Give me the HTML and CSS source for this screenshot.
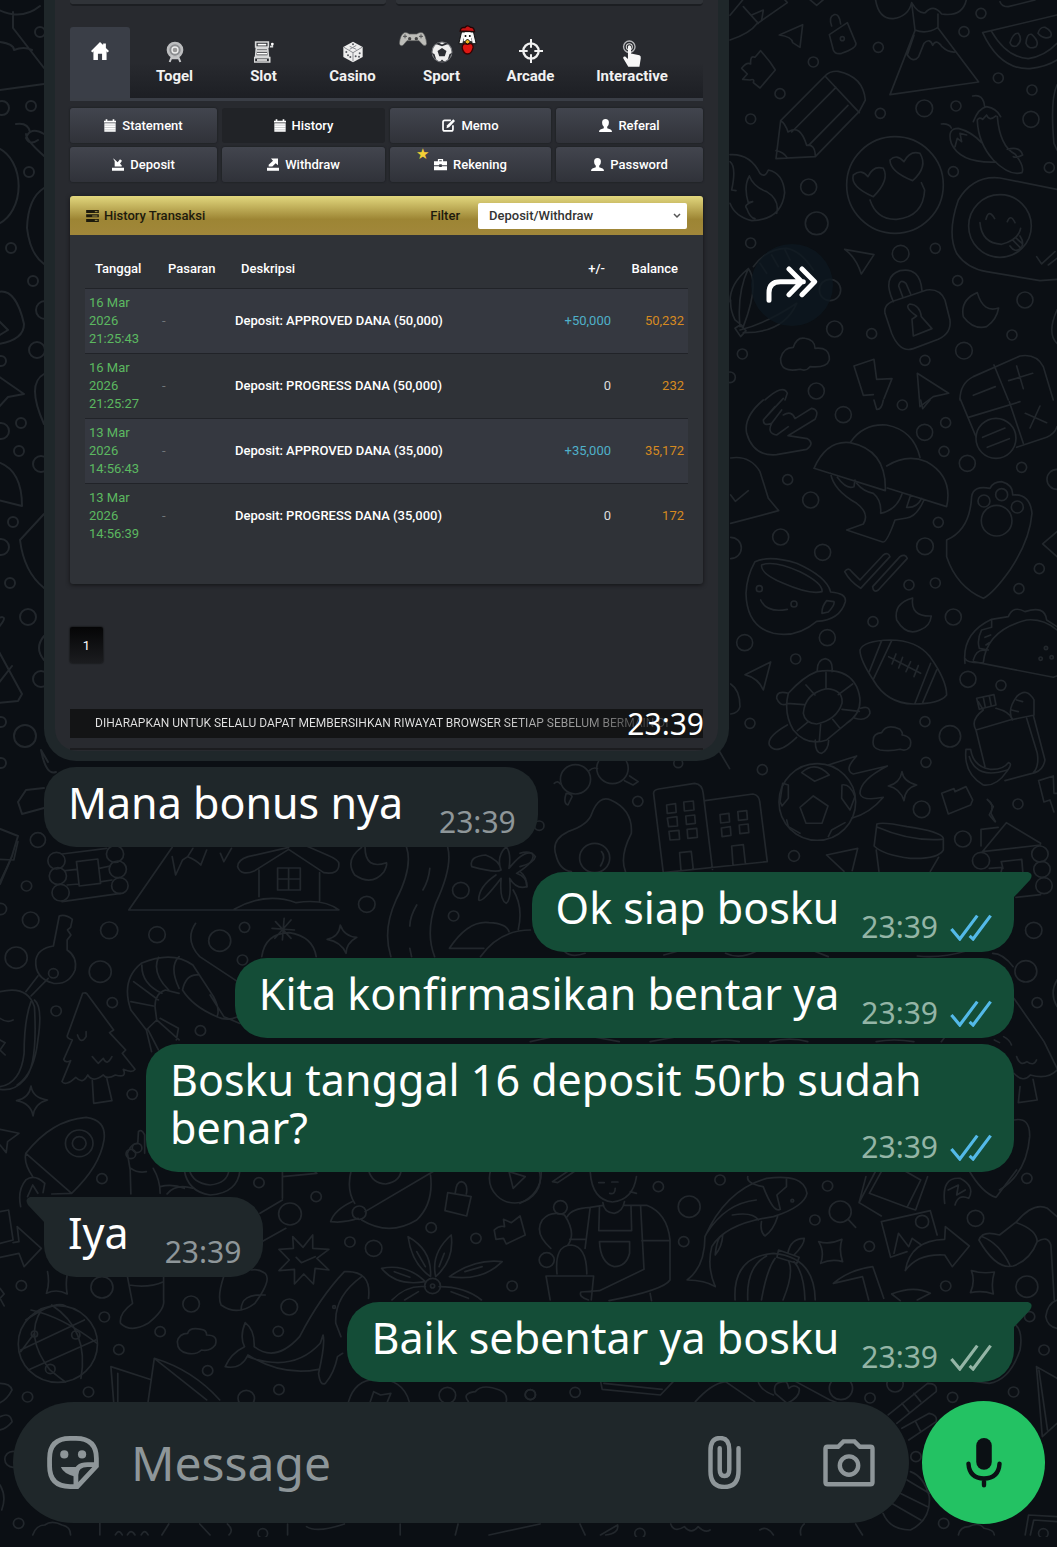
FILE: index.html
```html
<!DOCTYPE html>
<html lang="id">
<head>
<meta charset="utf-8">
<meta name="viewport" content="width=device-width, initial-scale=1">
<title>Chat</title>
<link rel="stylesheet" href="styles.css">
</head>

<body>
  <!-- wallpaper doodles -->
  <svg class="wallpaper" viewBox="0 0 1057 1537" preserveAspectRatio="xMidYMin slice" aria-hidden="true">
    <!-- left edge -->
    <g>
      <path d="M-5 8Q20 22 40 6M13 12V28L44 68M0 42Q14 44 14 50Q24 46 32 50M0 90L44 84M16 124Q28 122 30 132M44 134Q30 126 26 138Q30 146 38 140M44 156Q26 140 26 134M-2 148A30 40 0 0 1-2 224M44 188Q28 198 27 228Q30 254 44 264M-2 292Q16 288 24 324Q24 340-2 344M-2 320L8 330L-2 336M-2 376L24 394L8 397L-2 408M44 374Q26 384 44 424M-2 462Q22 470 22 506L-2 500M44 514L20 540Q24 572 44 588M-2 618Q10 614-2 628M-2 650L22 694L18 701L-2 703M-2 684L12 666M44 636Q34 648 44 660M-2 828L18 836L12 856L0 884M18 802L26 790L44 788M18 802L22 814L44 808M41 750L48 762M41 750Q46 776 56 772"/>
      <circle cx="40" cy="32" r="5"/><circle cx="31" cy="106" r="5"/><circle cx="2" cy="108" r="7"/><circle cx="29" cy="172" r="5"/><circle cx="11" cy="248" r="5"/><circle cx="33" cy="281" r="5"/><circle cx="45" cy="310" r="9"/><circle cx="37" cy="350" r="8"/><circle cx="1" cy="361" r="5"/><circle cx="21" cy="423" r="5"/><circle cx="1" cy="431" r="8"/><circle cx="19" cy="451" r="5"/><circle cx="41" cy="464" r="8"/><circle cx="13" cy="522" r="5"/><circle cx="1" cy="547" r="8"/><circle cx="10" cy="583" r="5"/><circle cx="28" cy="617" r="8"/><circle cx="41" cy="679" r="8"/><circle cx="25" cy="736" r="11"/><circle cx="1" cy="722" r="5"/><circle cx="1" cy="763" r="5"/>
    </g>
    <!-- top right -->
    <g transform="translate(700 0) scale(.3333)" stroke-width="5">
      <path d="M90 46L128 0M90 120Q150 100 170 72L262 8L250-6M130 20L175 70M155 45L190 30L185 60M325-5L350 16L375-5"/>
      <path d="M238 105L308 74L300 142L278 128Q276 110 238 105ZM388 104L442 68L468 130Q470 144 425 160Q405 164 400 150ZM395 78Q385 50 402 44Q418 40 422 72"/>
      <path d="M125 205Q140 185 152 192Q150 165 165 172L182 152L210 186L226 210L180 264L160 248Q165 235 150 240L128 238L142 222Z"/>
      <path d="M242 362L375 228Q390 212 415 214Q490 230 496 300L478 334L346 470L228 476ZM375 228L478 338M408 262L275 396M444 316L326 436M242 362Q256 370 264 396Q300 370 320 436Q345 432 346 468M228 452Q250 455 262 474"/>
      <path d="M526-5Q535 58 580 56Q625 50 635 8Q655 42 676 38Q700 10 725 42Q790 52 800-5M635 8L645 90Q680 104 714 82V42M645 92L570 284L836 246L714 84M642 106L622 165Q640 190 656 170L672 130Q690 112 698 136Q708 115 726 140Q745 158 766 156"/>
      <path d="M900 5Q905 20 925 20L1005 0M848 98L1071 45M848 98Q900 210 990 206Q1040 200 1071 180M875 95Q920 172 985 176Q1035 168 1071 130"/>
      <path d="M930 128Q940 98 955 100Q970 120 950 138Q935 142 930 128ZM978 130Q980 100 995 103Q1020 125 1008 140Q985 150 978 130ZM1014 100Q1020 80 1035 82Q1060 95 1052 110Q1030 120 1014 100Z"/>
      <path d="M818 288Q850 280 854 320M820 365Q835 325 860 320Q890 325 902 350M832 360Q838 350 848 358L860 345Q868 365 888 348M832 362Q835 430 880 480Q930 530 966 518Q975 500 945 462Q900 440 892 350M922 448Q960 438 968 465Q950 475 940 470M724 372Q748 370 754 384M754 430Q740 385 775 385Q815 395 845 428M754 430Q780 490 888 486M765 440L772 415L785 425L780 400L800 405"/>
      <path d="M90 464Q150 460 180 520Q195 535 205 510Q250 520 254 578Q245 660 155 662Q105 650 90 610M90 485Q110 500 95 570L108 572M148 528Q160 560 200 575Q240 600 230 640M148 528Q130 560 145 608L158 605Q130 615 140 625Q150 655 165 656"/>
      <circle cx="585" cy="555" r="145"/>
      <path d="M520 590Q450 560 460 525Q485 505 504 530Q520 495 550 505Q570 540 520 590ZM638 542Q570 515 570 480Q590 460 612 485Q630 450 660 460Q685 500 638 542ZM510 600Q530 660 590 658Q670 650 674 570L664 548"/>
      <path d="M1071 568L900 534Q820 525 775 600Q740 700 770 760Q800 805 860 815L1020 842L1071 838M840 668Q845 730 905 733Q955 720 962 685M858 658Q866 625 884 656M922 665Q932 640 945 668M930 738Q945 760 962 745Q975 730 960 708M940 722L960 742M948 714L968 732M1010 770L1025 792L1065 755M1045 795L1071 775"/>
      <circle cx="900" cy="678" r="94"/>
      <path d="M434 748L522 764L484 822Q468 772 434 748ZM90 905Q90 850 145 806Q180 850 130 980L105 960Q90 930 92 900M145 806Q110 880 120 980M120 990Q200 970 290 910Q250 1000 130 998M105 985L122 1010L138 992L120 975ZM160 800Q200 745 260 745Q300 750 340 810M180 790L200 820M215 765L235 800M255 750L270 780"/>
      <path d="M580 905Q545 830 600 812Q660 800 666 872M608 890L596 858Q600 835 618 850L632 882M555 940Q550 910 590 900L680 870Q720 865 735 900L750 960Q755 1000 715 1018L640 1046Q600 1060 575 1000ZM636 958L650 948Q610 920 630 912Q660 915 664 950L696 986L640 1008Z"/>
      <path d="M832 878Q780 900 790 950Q820 990 860 980Q890 960 896 924Q850 940 832 878ZM242 1075Q250 1042 280 1042Q290 1010 315 1015Q345 1020 345 1045Q390 1040 388 1080Q380 1105 330 1100Q320 1115 300 1108Q240 1120 242 1075ZM462 1098L522 1078L530 1138L576 1136L552 1196M462 1098L490 1186L520 1184M652 1120L746 1180L700 1190L660 1220ZM780 1200Q780 1150 820 1130L960 1068Q1010 1060 1030 1100L1060 1200M882 1095L925 1200M820 1186L886 1160M950 1098L970 1166M926 1142L998 1120M195 1200Q250 1150 262 1180L255 1200M1071 930Q1040 1000 1071 1030M1071 255Q1050 300 1062 430L1071 450"/>
      <circle cx="843" cy="40" r="15"/><circle cx="792" cy="95" r="15"/><circle cx="535" cy="142" r="15"/><circle cx="427" cy="116" r="6"/><circle cx="340" cy="186" r="15"/><circle cx="240" cy="281" r="15"/><circle cx="152" cy="357" r="15"/><circle cx="541" cy="340" r="15"/><circle cx="673" cy="325" r="25"/><circle cx="768" cy="318" r="15"/><circle cx="895" cy="234" r="15"/><circle cx="996" cy="270" r="15"/><circle cx="993" cy="358" r="24"/><circle cx="1048" cy="503" r="15"/><circle cx="760" cy="515" r="15"/><circle cx="326" cy="561" r="24"/><circle cx="350" cy="670" r="34"/><circle cx="152" cy="729" r="15"/><circle cx="602" cy="761" r="25"/><circle cx="706" cy="745" r="15"/><circle cx="773" cy="842" r="15"/><circle cx="390" cy="870" r="32"/><circle cx="404" cy="987" r="24"/><circle cx="515" cy="1001" r="15"/><circle cx="975" cy="900" r="24"/><circle cx="936" cy="1005" r="15"/><circle cx="792" cy="1052" r="25"/><circle cx="675" cy="1081" r="15"/><circle cx="127" cy="1062" r="15"/><circle cx="349" cy="1173" r="24"/><circle cx="90" cy="1132" r="16"/>
    </g>
    <!-- middle right -->
    <g transform="translate(700 400) scale(.3333)" stroke-width="5">
      <path d="M190 0Q130 50 140 100Q160 170 230 164L320 148Q345 130 322 116L264 107L345 58Q360 30 335 25L285 56Q275 30 250 45M250-5L190 60Q190 80 215 70L245 30M215 70Q200 100 230 105L265 80M190 60L225 20M522 0L530 28Q545 30 550 0M662 0L668 26L690 0"/>
      <path d="M780-5L828 110M805 52L960 5M928 5L970 130M950 142L1040 112Q1065 100 1071 80M976 40L1040 68M1020 18L990 84M848 112L915 84M862 142L928 116"/>
      <path d="M452 126Q490 70 560 75Q640 90 660 172M342 205Q380 120 450 128Q560 150 556 272ZM560 198Q620 160 680 185Q760 230 740 320L562 264M392 220Q400 270 470 310Q510 340 490 372L440 390L548 426Q560 430 585 360L620 354Q650 350 672 300M470 250Q490 275 520 280Q545 300 542 340Q590 330 606 282M412 232Q440 270 462 260L465 240M620 322L632 285M620 322Q650 325 665 295"/>
      <path d="M92 174Q150 165 180 215L205 295L236 332L92 370M92 285L106 304L145 272M92 412A32 32 0 0 1 92 476M92 852Q120 870 120 920Q115 940 92 942"/>
      <path d="M740 420Q810 390 815 290Q820 255 870 265Q880 245 905 245Q940 255 938 285Q990 280 996 340Q990 420 930 510Q880 580 850 595Q770 560 740 470ZM1071 395L1028 432L1071 470"/>
      <path d="M165 485Q210 465 290 490Q380 530 392 576Q440 580 436 605Q420 660 350 664Q290 715 220 700Q140 680 138 580Q140 530 165 485ZM185 495Q220 480 300 515Q370 550 366 575Q330 585 250 550Q180 520 185 495ZM380 602L402 605Q405 615 385 636L366 640Q365 620 380 602ZM182 600Q200 640 262 628"/>
      <path d="M434 515Q445 500 455 515L480 540L550 465Q565 455 570 470L482 565Q450 545 434 515ZM518 560L600 470Q615 460 622 475L535 570Q520 580 518 560Z"/>
      <path d="M638 594Q580 610 590 660Q620 710 660 690Q690 680 694 648Q630 650 638 594ZM480 750Q490 722 570 720Q650 720 690 770Q740 840 740 885Q720 912 640 912Q560 910 520 840Q480 780 480 750ZM545 722L508 815M575 722L520 838M692 790L645 910M710 810L668 908M566 770L662 820M588 762L576 792M608 772L596 804M632 785L618 815M655 797L642 830"/>
      <path d="M795 790Q785 700 875 658L925 650Q940 615 975 635Q1035 615 1040 660L1071 680M820 785L1060 832L1071 828M795 775Q800 790 850 788Q860 690 980 660Q1030 655 1071 690M875 660V682L845 690Q830 720 838 745L865 750M820 780Q830 745 858 752M855 712L872 705M858 735L868 728"/>
      <path d="M135 824L212 786L190 870Q175 835 135 824ZM265 880Q310 830 350 815Q440 800 470 860Q500 930 440 970L380 1020Q320 1040 280 990Q250 940 265 880ZM310 940Q315 880 380 866Q430 870 426 910Q410 960 350 972Q315 970 310 940ZM352 815Q350 780 376 776Q400 780 396 815M265 880Q230 870 230 895Q240 920 260 912M482 925Q510 915 510 940Q500 965 465 955M262 975Q200 1010 208 1035Q230 1070 290 1012M346 1020Q345 1060 365 1060Q385 1050 386 1022M378 818V866M318 855L345 885M262 910L312 914M292 992L325 965M358 1025L362 972M398 958L420 985M426 928L478 934M415 884L458 852"/>
      <path d="M520 1020Q520 1000 545 998Q560 970 600 988Q610 1000 606 1005Q640 1010 630 1040Q620 1055 600 1048Q570 1055 540 1050Q515 1045 520 1020ZM828 990L930 960L1000 946L1035 1080Q1030 1110 1005 1118L915 1142M828 990Q810 960 850 930L835 905M828 990L855 1100M830 895L882 884L888 915L838 928ZM850 892L856 922M868 888L874 918M888 925Q930 935 938 960Q920 930 950 890Q980 860 1002 900V945M950 900L968 905M935 930L955 935M980 955L1012 1060Q1018 1100 1000 1118M798 1048H812Q820 1100 870 1108Q910 1110 925 1088Q940 1090 920 1115Q890 1160 850 1155Q790 1120 798 1048ZM808 1070Q830 1140 922 1110"/>
      <circle cx="352" cy="1206" r="115"/>
      <path d="M340 1188L384 1218L366 1270H318L300 1222ZM305 1118Q345 1080 388 1125L344 1144ZM385 1095L470 1068Q430 1110 460 1122L562 1098Q480 1140 480 1180Q485 1205 550 1192Q510 1240 455 1255M240 1205L248 1150L265 1155V1195L246 1218ZM426 1155Q450 1150 465 1190L450 1230L425 1195ZM260 1260L265 1280L300 1300M385 1310L395 1290L435 1268"/>
      <path d="M606 1115Q610 1145 650 1155Q615 1165 612 1202Q600 1165 565 1158Q600 1150 606 1115ZM725 1180L762 1166L765 1175L798 1160L818 1200L812 1215L745 1242ZM862 1198L880 1220L868 1245L885 1265M1016 1142L1060 1128L1062 1180H1071M1016 1142L1032 1206L1050 1200L1062 1236"/>
      <circle cx="888" cy="115" r="60"/><circle cx="890" cy="362" r="46"/><circle cx="852" cy="303" r="18"/><circle cx="905" cy="284" r="18"/><circle cx="952" cy="321" r="18"/>
      <circle cx="178" cy="566" r="9"/><circle cx="282" cy="612" r="9"/><circle cx="1038" cy="744" r="5"/><circle cx="1022" cy="776" r="5"/><circle cx="1055" cy="772" r="5"/>
      <circle cx="430" cy="44" r="24"/><circle cx="607" cy="15" r="15"/><circle cx="674" cy="97" r="24"/><circle cx="737" cy="68" r="15"/><circle cx="732" cy="154" r="15"/><circle cx="802" cy="190" r="24"/><circle cx="965" cy="202" r="15"/><circle cx="263" cy="239" r="15"/><circle cx="332" cy="300" r="24"/><circle cx="242" cy="411" r="24"/><circle cx="368" cy="457" r="24"/><circle cx="715" cy="367" r="15"/><circle cx="675" cy="439" r="25"/><circle cx="627" cy="555" r="15"/><circle cx="706" cy="549" r="15"/><circle cx="957" cy="566" r="15"/><circle cx="1018" cy="506" r="15"/><circle cx="519" cy="665" r="15"/><circle cx="760" cy="651" r="24"/><circle cx="382" cy="713" r="24"/><circle cx="134" cy="728" r="24"/><circle cx="287" cy="777" r="15"/><circle cx="804" cy="838" r="24"/><circle cx="903" cy="856" r="15"/><circle cx="675" cy="965" r="15"/><circle cx="750" cy="1009" r="32"/><circle cx="150" cy="970" r="15"/><circle cx="187" cy="1109" r="15"/><circle cx="678" cy="1087" r="15"/><circle cx="665" cy="1228" r="25"/><circle cx="954" cy="1212" r="15"/><circle cx="1071" cy="238" r="30"/>
    </g>
    <!-- lower right -->
    <g transform="translate(520 740) scale(.3425 .3333)" stroke-width="5">
      <circle cx="162" cy="118" r="44"/><circle cx="270" cy="85" r="46"/><circle cx="218" cy="354" r="44"/>
      <path d="M202 92Q215 80 226 86M135 160Q150 160 152 170L140 195Q125 190 135 160ZM320 108L345 125L330 135L305 122M100 130Q110 120 118 132M580 30L612 86M105 345Q90 300 140 275Q200 255 210 220Q230 165 265 180Q330 210 325 280Q290 350 308 395M105 345Q115 390 150 395M238 335Q252 350 235 378M0 340Q30 330 45 350Q40 370 0 380M0 395Q20 410 20 440"/>
      <path d="M418 395L390 160Q390 150 405 147L510 130Q532 132 535 160L562 388M540 182L680 162Q698 165 700 185L722 365L418 398M428 195L454 191L456 217L430 220ZM478 186L506 183L508 210L480 213ZM430 234L458 230L460 258L434 260ZM484 228L510 225L512 250L486 253ZM435 274L464 271L466 298L438 300ZM488 268L516 265L518 292L490 295ZM584 224L610 220L612 246L586 249ZM636 215L662 212L664 238L638 241ZM588 264L614 260L616 286L590 290ZM640 255L666 252L668 278L642 281ZM470 392L466 338L500 334L506 388M622 376L618 318L652 314L658 370"/>
      <path d="M895 345L986 325L970 392M895 345L946 394M1042 252Q1060 245 1130 260Q1230 275 1236 295V330Q1220 358 1140 355Q1060 345 1034 318ZM1044 262Q1140 305 1232 298M1040 330L1048 394M1222 352L1198 394M1346 318V268L1396 262M1350 335L1420 248L1520 310M1350 335L1520 315M1370 385L1408 382L1405 395M1405 365L1465 358L1468 395M1405 365L1410 385M1448 472L1520 464M1365 180Q1385 190 1375 220L1388 245"/>
      <circle cx="1346" cy="362" r="25"/><circle cx="1518" cy="342" r="24"/><circle cx="1524" cy="388" r="24"/><circle cx="1530" cy="437" r="24"/><circle cx="344" cy="184" r="15"/><circle cx="800" cy="348" r="16"/><circle cx="462" cy="70" r="13"/><circle cx="56" cy="257" r="14"/><circle cx="1293" cy="297" r="24"/><circle cx="1500" cy="571" r="24"/><circle cx="1477" cy="694" r="32"/><circle cx="1510" cy="788" r="15"/>
      <path d="M1442 775L1510 875L1530 905L1568 985M1385 900L1400 908M1412 890Q1430 900 1435 915M1450 950Q1460 980 1480 965Q1500 980 1508 960M1442 1000Q1470 1030 1490 1005Q1540 1020 1568 990M1460 1040L1455 1088L1510 1080L1498 1018M1442 1140Q1490 1130 1488 1190Q1480 1300 1400 1350M1568 720Q1545 760 1568 800"/>
      <path d="M130 634Q150 655 190 640M420 645L460 634M600 640Q640 660 690 634M860 634L900 650M1160 648Q1230 655 1300 634M1380 640Q1410 640 1440 680M30 905L90 892M220 892L290 905M380 905L450 892M560 905Q600 895 640 905M730 905Q790 890 840 905M1040 905Q1090 895 1150 905M1230 905L1240 892"/>
    </g>
    <!-- middle left -->
    <g transform="translate(0 840) scale(.3444 .3333)" stroke-width="5">
      <path d="M52 5L40 60L0 58M28 65L0 125M180 42L310 25M180 185L350 160M190 92L222 88M195 135L228 132M288 85L320 78M295 125L325 120M222 65L284 57L292 130L230 138Z"/>
      <circle cx="164" cy="62" r="25"/><circle cx="168" cy="108" r="25"/><circle cx="176" cy="158" r="25"/><circle cx="334" cy="42" r="25"/><circle cx="342" cy="88" r="25"/><circle cx="348" cy="137" r="24"/>
      <path d="M500 22L374 210H984Q940 175 860 188Q770 155 680 208M500 50L510 105L530 60L545 50Q570 60 583 75L600 30M560 25L545 50M640 40L650 65L672 25M690 80Q690 60 720 50L838 22M690 80Q700 110 740 92L838 28L940 98Q985 105 984 72Q985 60 950 45L850 0M752 90V170M928 98V182M806 84H872V150H806ZM806 117H872M838 84V150"/>
      <path d="M1050 22Q1000 60 1030 105Q1080 140 1115 95Q1125 75 1122 68Q1060 90 1060 22M1180 20Q1200 80 1150 180Q1110 270 1135 350M1300 22Q1315 80 1265 190Q1235 280 1262 350M1248 85Q1245 120 1228 150M1210 195Q1190 230 1190 258M1190 325L1195 350M1455 90Q1440 100 1370 80Q1360 50 1410 45Q1450 60 1455 90Q1440 50 1470 20Q1485 40 1478 85Q1520 30 1545 40Q1560 60 1500 100Q1530 110 1530 140Q1500 150 1480 115Q1485 180 1470 190Q1450 180 1455 115Q1400 190 1390 180Q1390 140 1440 105M1490 150Q1520 200 1505 268M1305 325Q1360 240 1420 248Q1470 250 1478 275M1305 325H1405M1395 350Q1450 270 1540 270"/>
      <path d="M155 318L172 228Q190 222 210 238L205 262L196 270L206 285L195 300V330Q225 350 218 390Q200 435 155 430Q100 415 104 360Q110 325 155 318ZM140 415L90 468M110 408L75 455"/>
      <path d="M0 455Q80 435 100 500Q110 680 70 720Q40 755 0 748M0 740Q60 730 70 640Q70 540 90 485M100 480Q125 500 110 600Q100 700 50 735M0 535Q20 550 38 540M0 600L15 608L0 630L15 645"/>
      <path d="M240 460Q250 455 255 465L330 570L318 578L365 630L355 640L392 688Q385 700 358 688Q370 715 335 705Q310 720 300 705Q270 730 255 705Q240 735 220 712Q190 740 180 725L205 662Q190 670 185 658L210 600Q195 595 195 588ZM225 585Q235 615 250 590V575M268 650L285 670L300 655Q310 680 325 650M268 722L272 790L325 782L310 715"/>
      <path d="M568 250Q535 300 580 350L690 425M760 350Q770 280 840 278Q910 290 918 350M790 265L855 270M800 245L845 295M825 235L820 300M845 240L798 295M988 255Q1000 290 1036 292Q1005 310 1005 340Q990 305 950 298Q985 290 988 255Z"/>
      <path d="M440 635L425 570L380 510Q350 420 410 370Q500 330 560 375L620 470Q640 510 630 530Q560 500 530 450Q540 400 578 405M455 540L450 500Q450 460 480 450L520 460M380 485L445 498M388 425L460 480M412 375Q410 430 470 460M460 352Q440 400 490 450M520 350Q490 380 520 445M455 540L425 570M455 540L520 600M465 535L518 565L512 600M430 570L460 630M610 465L650 530L695 550M630 530Q660 545 690 530"/>
      <path d="M90 738Q95 775 138 780Q100 790 96 828Q90 790 48 782Q85 775 90 738ZM0 868L55 880L22 905L18 938L0 915M75 940Q150 840 250 832Q310 840 302 900Q290 980 208 1060ZM75 940Q68 970 95 1010M208 1060L150 1062M60 1100Q50 1050 75 1020Q100 1000 130 1030L125 1058M80 1070L95 1035L110 1060M380 1062L378 990L370 940Q380 910 400 910L402 875Q410 865 420 885V940M380 985Q400 1000 425 995M445 985Q465 1020 465 1060M465 1040Q500 1030 535 1045M485 1062Q510 1030 560 1045"/>
      <circle cx="230" cy="910" r="40"/><circle cx="230" cy="910" r="20"/><circle cx="380" cy="942" r="14"/><circle cx="398" cy="924" r="14"/><circle cx="155" cy="400" r="14"/>
      <circle cx="110" cy="0" r="22"/><circle cx="77" cy="138" r="15"/><circle cx="89" cy="240" r="24"/><circle cx="2" cy="207" r="17"/><circle cx="47" cy="353" r="32"/><circle cx="317" cy="271" r="25"/><circle cx="456" cy="284" r="24"/><circle cx="638" cy="302" r="32"/><circle cx="710" cy="262" r="15"/><circle cx="704" cy="360" r="15"/><circle cx="291" cy="395" r="32"/><circle cx="326" cy="488" r="15"/><circle cx="163" cy="513" r="15"/><circle cx="582" cy="572" r="15"/><circle cx="384" cy="763" r="15"/><circle cx="1065" cy="193" r="24"/><circle cx="1338" cy="151" r="24"/><circle cx="1317" cy="228" r="15"/>
    </g>
    <!-- bottom left -->
    <g transform="translate(0 1170) scale(.3444 .3333)" stroke-width="5">
      <path d="M535 0Q545 65 610 75Q690 70 697 0M550 0Q560 40 610 45Q660 40 665 0M820 0V85M820 20L920 10L905-5M755 130L820 90M760 215L830 175M1020 0Q1005 60 1030 100M1070 0Q1080 40 1120 42Q1165 35 1165-5M1265 0L1060 125M1250 15Q1260 100 1210 150Q1130 200 1050 150M1022 95Q970 120 960 155Q1000 160 1040 145M1300 68L1368 80L1355 138L1292 122ZM1322 68Q1325 35 1340 35Q1360 40 1354 72M1478 5L1525 20L1490 55Z"/>
      <circle cx="842" cy="132" r="33"/><circle cx="1043" cy="128" r="20"/><circle cx="1495" cy="25" r="74"/>
      <path d="M0 125L25 120L38 210L0 220M50 170L120 235L70 290L55 250L0 262M50 170L55 215L38 218M0 355L12 372L0 385L12 408M1435 180Q1450 165 1465 170L1462 148L1485 158L1510 138L1525 195L1470 222L1462 205L1440 208ZM880 232L908 195V235L955 238L920 265L955 300L915 295L910 342L882 312L855 342V298L810 302L840 270L810 238L852 235L850 200ZM860 262L875 278L915 260"/>
      <path d="M1185 200Q1255 240 1250 320Q1195 280 1185 200ZM1310 195Q1320 270 1265 320Q1250 250 1310 195ZM1108 295Q1180 280 1235 335Q1150 350 1108 295ZM1458 275Q1380 265 1305 320Q1400 335 1458 275ZM1235 350Q1180 345 1138 390M1275 350Q1350 350 1398 390M1210 245L1235 290M1290 250L1275 290M1145 305L1190 322M1350 305L1400 290M1215 365L1175 390M1310 365L1360 385"/>
      <circle cx="1256" cy="348" r="23"/><circle cx="1256" cy="348" r="6"/>
      <path d="M138 305Q145 340 135 370Q165 355 195 372Q190 340 195 315M370 320L385 400Q345 430 350 460Q380 490 430 460Q480 420 475 390V320M375 345Q430 355 475 335M650 318Q630 380 642 405Q690 440 740 400Q790 330 770 310Q750 295 730 300M700 420Q700 370 770 375"/>
      <circle cx="168" cy="522" r="115"/>
      <path d="M75 450Q160 390 190 408M60 540L245 450M82 600L278 510M120 420Q70 500 145 600Q180 630 190 636M150 405Q260 480 235 625M100 490L60 545M90 420Q180 440 282 520"/>
      <path d="M515 515Q520 490 545 490Q550 470 585 478Q600 480 600 495Q635 495 625 525Q610 545 585 540Q570 555 545 550Q515 545 515 515ZM712 458Q740 480 738 530Q800 580 870 500Q930 380 1000 305Q1080 300 1070 385M654 590Q670 550 710 530Q695 500 712 458M654 590Q700 600 720 555Q820 620 925 598M720 560Q850 610 930 520L938 495Q945 520 925 610Q930 650 945 640Q970 610 980 560L995 550M1050 320Q970 380 975 460L990 500M330 695L322 590L435 628M342 695V610M430 695L448 565L600 690M448 565Q560 600 638 690M0 640Q30 640 35 660Q20 690 0 698M0 740Q30 725 35 755Q20 775 0 780M1012 695Q1030 630 1090 628Q1170 625 1188 695M1075 695L1085 665L1105 675L1135 670L1125 695M1360 695Q1340 670 1380 665Q1400 640 1450 660Q1475 670 1470 695M0 945Q20 980 5 1020M95 1095Q105 1065 130 1065Q150 1050 180 1065Q205 1070 205 1095M290 1060V1095M335 1095Q345 1075 355 1095M370 1095Q380 1075 392 1095M410 1095Q420 1075 430 1095M490 1062L470 1095M580 1062L610 1095M660 1062Q680 1080 665 1095M835 1062V1095M890 1070Q920 1090 1000 1062M1162 1062V1095M1330 1062L1322 1095M1420 1095L1568 1062"/>
      <circle cx="100" cy="492" r="9"/><circle cx="220" cy="495" r="12"/><circle cx="146" cy="597" r="14"/><circle cx="970" cy="411" r="4"/>
      <circle cx="296" cy="26" r="15"/><circle cx="752" cy="38" r="15"/><circle cx="918" cy="80" r="15"/><circle cx="1016" cy="216" r="15"/><circle cx="1085" cy="235" r="24"/><circle cx="1252" cy="173" r="15"/><circle cx="1382" cy="205" r="15"/><circle cx="1487" cy="348" r="15"/><circle cx="62" cy="347" r="15"/><circle cx="296" cy="352" r="32"/><circle cx="555" cy="402" r="24"/><circle cx="303" cy="441" r="15"/><circle cx="465" cy="485" r="15"/><circle cx="345" cy="539" r="15"/><circle cx="603" cy="602" r="15"/><circle cx="840" cy="411" r="24"/><circle cx="808" cy="484" r="15"/><circle cx="810" cy="659" r="15"/><circle cx="257" cy="666" r="15"/><circle cx="80" cy="681" r="15"/><circle cx="715" cy="685" r="24"/><circle cx="1299" cy="676" r="24"/><circle cx="1540" cy="674" r="15"/><circle cx="38" cy="868" r="24"/><circle cx="54" cy="1060" r="15"/><circle cx="763" cy="1090" r="14"/>
    </g>
    <!-- bottom right -->
    <g transform="translate(520 1170) scale(.3425 .3333)" stroke-width="5">
      <path d="M0 100Q65 70 62 0M95 35L145 0M95 35L110 38L165 0M205 5Q210 90 270 96Q330 90 340 20M340 70L322 65M230 38H246M268 36H286M262 70Q278 75 278 55M242 98Q245 128 275 130Q300 125 305 95M205 112L242 106M305 106H370Q430 130 438 210V330Q420 360 260 392M205 112Q150 115 138 140M205 112L190 235M232 112L230 182H326L324 106M352 106L362 298L232 362L178 366Q170 380 200 390M356 212H438M145 208H192M232 215H320V250Q310 290 275 290Q235 280 232 215ZM76 318H215L208 390M76 318L88 390M108 312Q100 225 150 225Q195 230 195 312M90 235Q40 190 65 150Q90 120 130 135Q165 190 140 225M380 370L384 392"/>
      <path d="M488 330Q540 290 540 200Q600 60 720 25Q830 10 838 70Q830 110 740 140Q600 160 560 230Q545 290 570 350Q540 330 488 330ZM665 20Q660 40 710 50Q740 130 760 118L750 75L778 50V25M570 255Q590 230 592 195Q575 200 570 255ZM620 135Q680 125 696 150M705 155Q700 185 715 198Q740 180 752 140M545 190Q600 100 690 90"/>
      <path d="M958 148L980 172M1040 0L990 98L1055 138M990 98L1010 20M1055 5L1020 70L1130 112L1170 30L1110-5M1130 112L1155 120L1190 20M1055 155L1198 122L1218 195M1055 155L1082 262L1130 245M1092 250L1105 190L1135 230L1145 205L1172 225M1125 302Q1140 210 1240 208L1242 170L1312 228L1262 290L1240 255Q1160 250 1125 302ZM1240 100Q1230 20 1285 25Q1330 50 1310 85Q1280 70 1270 105M1250 60L1280 45L1275 75L1300 60M1310 0Q1350 70 1390 82L1450 0M1340 210Q1350 180 1400 195L1450 155Q1500 95 1540 115L1568 140M1340 210Q1390 300 1440 288Q1490 270 1510 215Q1510 180 1450 158M1350 200Q1400 220 1430 285M1510 215Q1540 195 1550 225L1560 390M1535 440Q1540 400 1568 390M1535 440Q1540 470 1568 475"/>
      <path d="M628 390Q620 260 740 250Q860 260 862 390M665 390Q660 290 720 258M705 390Q720 300 745 265M768 390Q800 310 785 275M832 390Q830 310 800 275M755 240L815 262L808 280L750 262ZM782 250Q790 205 830 205Q830 225 800 255M872 215Q905 225 940 208Q930 240 942 275Q910 265 878 280Q890 245 872 215ZM1318 302Q1350 312 1385 306Q1375 340 1382 372Q1350 360 1315 368Q1330 335 1318 302ZM915 340Q960 300 1030 290L1062 385M915 340L1000 320L1018 390M1085 372Q1150 345 1198 370L1160 390M1085 372L1110 392M1442 460Q1470 480 1460 540Q1430 630 1370 640L1310 632"/>
      <path d="M235 632L240 658L410 675L450 632M245 640L415 658M512 695Q560 640 600 635L685 695M695 632Q700 660 740 675M775 635Q735 635 745 670L780 700Q820 680 815 655Q800 640 785 655Q780 635 775 635ZM800 632L905 690L930 700M1075 735L1190 640Q1220 640 1215 665L1100 760M1115 700L1135 725M1150 670L1170 695M1115 775L1195 730Q1220 735 1215 755L1135 810M1155 755L1170 785M1508 590L1525 800L1568 760M1508 590L1568 625M1515 600L1540 780M1060 1030Q1080 1080 1140 1080Q1200 1050 1195 980Q1180 920 1140 905M1085 1000L1170 1050M1110 970L1190 1010M1130 930L1195 970M1280 1095Q1285 1070 1310 1070Q1340 1055 1355 1075Q1385 1080 1385 1095M1475 1095L1485 1035L1568 1040M1490 1095L1500 1050L1568 1055M235 1095L285 1065Q290 1090 250 1095M440 1062Q450 1090 480 1070Q500 1095 520 1070Q540 1090 555 1080M700 1080Q720 1065 740 1095M820 1095Q815 1075 830 1062M980 1062L1000 1095M175 1062L190 1095"/>
      <circle cx="118" cy="112" r="20"/><circle cx="78" cy="270" r="22"/><circle cx="935" cy="125" r="32"/><circle cx="1174" cy="155" r="19"/><circle cx="795" cy="92" r="4"/>
      <circle cx="404" cy="50" r="15"/><circle cx="584" cy="30" r="15"/><circle cx="494" cy="110" r="32"/><circle cx="478" cy="215" r="15"/><circle cx="898" cy="48" r="15"/><circle cx="861" cy="150" r="15"/><circle cx="1020" cy="229" r="15"/><circle cx="1330" cy="145" r="24"/><circle cx="1480" cy="25" r="15"/><circle cx="1243" cy="348" r="15"/><circle cx="1480" cy="350" r="32"/><circle cx="1488" cy="440" r="15"/><circle cx="1530" cy="540" r="15"/><circle cx="1441" cy="666" r="15"/><circle cx="1263" cy="682" r="15"/><circle cx="1022" cy="684" r="15"/><circle cx="937" cy="655" r="34"/><circle cx="1095" cy="642" r="24"/><circle cx="161" cy="667" r="15"/><circle cx="30" cy="674" r="15"/><circle cx="1156" cy="860" r="15"/><circle cx="1237" cy="1060" r="15"/><circle cx="1528" cy="1090" r="14"/><circle cx="350" cy="1090" r="15"/>
    </g>
  </svg>

  <!-- shared icons -->
  <svg class="defs" aria-hidden="true">
    <symbol id="ticks" viewBox="0 0 120 76">
      <path d="M4 42L28 71L78 4M56 62L66 71L116 4" fill="none" stroke="currentColor" stroke-width="9"/>
    </symbol>
    <symbol id="calendar" viewBox="0 0 36 38">
      <path d="M0 5H5V0H10V5H26V0H31V5H36V10H0ZM1 12H35V38H1Z" fill="currentColor"/>
      <path d="M1 18H35M1 25H35M1 32H35" stroke="#6b6e74" stroke-width="1"/>
    </symbol>
    <symbol id="user" viewBox="0 0 38 38">
      <path d="M19 0Q29 0 29 11Q29 19 24 23V27L34 31Q38 33 38 38H0Q0 33 4 31L14 27V23Q9 19 9 11Q9 0 19 0Z" fill="currentColor"/>
    </symbol>
  </svg>

  <main class="chat">
    <div class="row">
      <article class="bubble photo">
        <div class="shot">
          <div class="cards"><span></span><span></span></div>

          <nav class="tabs">
            <a href="#" class="home" aria-label="Home">
              <svg width="18" height="18" viewBox="0 0 52 52"><path d="M26 0L35 9V4H43V17L52 26L48 30L45 27V52H32V34H20V52H7V27L4 30L0 26Z" fill="#fff"/></svg>
            </a>
            <a href="#">
              <svg width="18" height="22" viewBox="0 0 54 64"><circle cx="27" cy="26" r="21" fill="#8b8d90" stroke="#bcbdbf" stroke-width="8"/><circle cx="27" cy="26" r="9" fill="#999" stroke="#eee" stroke-width="4"/><path d="M19 42L11 62M35 42L43 62M15 51H39" stroke="#c6c7c9" stroke-width="6"/></svg>
              Togel
            </a>
            <a href="#">
              <svg width="20" height="22" viewBox="0 0 60 64"><path d="M5 2H43V17H5ZM7 22H41L43 44H5ZM1 49H47V62H1ZM48 16H55V6" fill="none" stroke="#d8d9da" stroke-width="5"/><path d="M11 10H37M9 29H39M9 37H39M9 56H39" stroke="#fff" stroke-width="5"/><circle cx="55" cy="8" r="4" fill="#fff"/></svg>
              Slot
            </a>
            <a href="#">
              <svg width="20" height="22" viewBox="0 0 60 64"><path d="M30 1L59 17V47L30 63L1 47V17Z" fill="#eee"/><path d="M3 18L30 34L57 18M30 34V60M20 15L40 24M40 12L20 24" stroke="#8b8d92" stroke-width="3" fill="none"/><g fill="#55585e"><circle cx="10" cy="32" r="3"/><circle cx="22" cy="47" r="3"/><circle cx="15" cy="42" r="3"/><circle cx="38" cy="45" r="3"/><circle cx="50" cy="36" r="3"/><circle cx="48" cy="46" r="3"/><circle cx="30" cy="9" r="3"/></g></svg>
              Casino
            </a>
            <a href="#" class="sport">
              <svg class="pad" width="28" height="16" viewBox="0 0 84 44"><path d="M16 3Q24 1 31 7H53Q60 1 70 3Q80 8 83 36Q80 46 72 40L60 27H24L12 41Q3 45 1 35Q4 8 16 3Z" fill="#bdbdb9" stroke="#5b5c5c" stroke-width="2"/><path d="M18 8V20M12 14H24M66 8V20M60 14H72" stroke="#4d4e50" stroke-width="3"/><circle cx="32" cy="21" r="5" fill="#444"/><circle cx="52" cy="21" r="5" fill="#444"/></svg>
              <svg width="22" height="22" viewBox="0 0 64 64"><circle cx="32" cy="32" r="29" fill="#eee" stroke="#77797d" stroke-width="3"/><path d="M32 20L45 29L40 44H24L19 29ZM22 4L32 10L43 4L50 9L32 15L14 9ZM3 35L10 38L15 53L10 50ZM61 35L54 38L49 53L54 50ZM26 60L32 54L39 60Z" fill="#2b2d32"/></svg>
              <svg class="hen" width="19" height="30" viewBox="0 0 56 90"><path d="M6 18Q8 5 20 8Q27-2 37 7Q48 6 49 20Z" fill="#c81414" stroke="#260404" stroke-width="4"/><path d="M10 21H46L54 56H42L39 40H18L14 56H2Z" fill="#f5f5f5" stroke="#111" stroke-width="3"/><path d="M20 22H37L41 49H16Z" fill="#fff"/><path d="M28 42L37 51L28 58L19 51Z" fill="#edb31e" stroke="#111" stroke-width="3"/><path d="M28 58Q45 51 45 68Q40 87 28 87Q16 87 12 69Q12 52 28 58Z" fill="#df1712" stroke="#370202" stroke-width="4"/><circle cx="22" cy="33" r="3"/><circle cx="35" cy="33" r="3"/></svg>
              Sport
            </a>
            <a href="#">
              <svg width="24" height="24" viewBox="0 0 72 72"><circle cx="36" cy="36" r="23" fill="none" stroke="#f1f1f1" stroke-width="7"/><path d="M36 0V26M36 46V72M0 36H26M46 36H72" stroke="#f1f1f1" stroke-width="6"/></svg>
              Arcade
            </a>
            <a href="#" class="wide">
              <svg width="20" height="27" viewBox="0 0 56 80"><circle cx="20" cy="20" r="17" fill="none" stroke="#b6b7ba" stroke-width="4"/><circle cx="20" cy="20" r="9" fill="none" stroke="#ddd" stroke-width="3"/><path d="M16 19Q20 12 25 19V40L50 45Q55 46 54 54L50 79H17L2 54Q1 47 8 49L16 56Z" fill="#f7f7f7"/></svg>
              Interactive
            </a>
          </nav>

          <div class="menu">
            <button><svg width="12" height="13"><use href="#calendar"/></svg>Statement</button>
            <button class="active"><svg width="12" height="13"><use href="#calendar"/></svg>History</button>
            <button><svg width="13" height="13" viewBox="0 0 38 38"><path d="M26 4H8Q3 4 3 9V30Q3 35 8 35H27Q32 35 32 30V18" fill="none" stroke="#fff" stroke-width="5"/><path d="M13 27L15 18L33 1L38 6L21 24Z" fill="#fff"/></svg>Memo</button>
            <button><svg width="13" height="13"><use href="#user"/></svg>Referal</button>
            <button><svg width="12" height="13" viewBox="0 0 36 38"><path d="M0 29H36V38H0ZM8 9V25H29V21L24 17L30 8L24 3L17 12L8 4L3 0Z" fill="#fff"/></svg>Deposit</button>
            <button><svg width="12" height="13" viewBox="0 0 36 38"><path d="M0 29H36V38H0ZM12 1H33V21L26 15L16 25H5V20L18 8Z" fill="#fff"/></svg>Withdraw</button>
            <button class="starred"><span class="star">★</span><svg width="13" height="13" viewBox="0 0 40 36"><path d="M12 8V1H28V8H40V20H24V17H16V20H0V8ZM16 8H24V5H16ZM0 23H16V26H24V23H40V36H0Z" fill="#fff"/></svg>Rekening</button>
            <button><svg width="13" height="13"><use href="#user"/></svg>Password</button>
          </div>

          <section class="history">
            <header>
              <svg width="13" height="12" viewBox="0 0 38 36"><path d="M0 0H38V9H0ZM0 13H38V22H0ZM0 27H38V36H0Z" fill="#1d1a0c"/><path d="M26 5H34M18 18H34M26 31H34" stroke="#a3924a" stroke-width="3"/></svg>
              <h2>History Transaksi</h2>
              <label for="filter">Filter</label>
              <span class="select">
                <select id="filter"><option>Deposit/Withdraw</option></select>
                <svg width="8" height="6" viewBox="0 0 8 6"><path d="M1 1L4 4L7 1" fill="none" stroke="#555" stroke-width="1.5"/></svg>
              </span>
            </header>
            <table>
              <thead>
                <tr><th class="date">Tanggal</th><th class="market">Pasaran</th><th>Deskripsi</th><th class="amount">+/-</th><th class="balance">Balance</th></tr>
              </thead>
              <tbody>
                <tr><td class="date">16 Mar 2026 21:25:43</td><td>-</td><td class="desc">Deposit: APPROVED DANA (50,000)</td><td class="amount plus">+50,000</td><td class="balance">50,232</td></tr>
                <tr><td class="date">16 Mar 2026 21:25:27</td><td>-</td><td class="desc">Deposit: PROGRESS DANA (50,000)</td><td class="amount">0</td><td class="balance">232</td></tr>
                <tr><td class="date">13 Mar 2026 14:56:43</td><td>-</td><td class="desc">Deposit: APPROVED DANA (35,000)</td><td class="amount plus">+35,000</td><td class="balance">35,172</td></tr>
                <tr><td class="date">13 Mar 2026 14:56:39</td><td>-</td><td class="desc">Deposit: PROGRESS DANA (35,000)</td><td class="amount">0</td><td class="balance">172</td></tr>
              </tbody>
            </table>
          </section>

          <button class="page">1</button>
          <div class="ticker">DIHARAPKAN UNTUK SELALU DAPAT MEMBERSIHKAN RIWAYAT BROWSER SETIAP SEBELUM BERMAIN DI</div>
          <time>23:39</time>
        </div>
      </article>
      <button class="forward" aria-label="Forward">
        <svg width="52" height="38" viewBox="0 0 156 114"><path d="M9 103V80Q9 47 43 47H112M69 9L107 47L69 86M108 9L146 47L108 86" fill="none" stroke="#fff" stroke-width="15" stroke-linecap="round" stroke-linejoin="round"/></svg>
      </button>
    </div>

    <article class="bubble in"><p>Mana bonus nya</p><span class="meta"><time>23:39</time></span></article>

    <article class="bubble out first"><p>Ok siap bosku</p><span class="meta"><time>23:39</time><svg class="read"><use href="#ticks"/></svg></span></article>
    <article class="bubble out"><p>Kita konfirmasikan bentar ya</p><span class="meta"><time>23:39</time><svg class="read"><use href="#ticks"/></svg></span></article>
    <article class="bubble out long"><p>Bosku tanggal 16 deposit 50rb sudah benar?</p><span class="meta"><time>23:39</time><svg class="read"><use href="#ticks"/></svg></span></article>

    <article class="bubble in first"><p>Iya</p><span class="meta"><time>23:39</time></span></article>

    <article class="bubble out first"><p>Baik sebentar ya bosku</p><span class="meta"><time>23:39</time><svg><use href="#ticks"/></svg></span></article>
  </main>

  <form class="composer">
    <div class="field">
      <button type="button" aria-label="Stickers">
        <svg width="52" height="53" viewBox="136 802 151 155"><g fill="none" stroke="currentColor" stroke-width="14"><path d="M203 809H220Q280 809 280 868V890L224 950H203Q143 950 143 890V868Q143 809 203 809Z"/><path d="M280 886H254Q220 886 220 916V948"/></g><path d="M176 893H232Q230 905 214 920Q184 912 176 893Z" fill="currentColor"/><circle cx="186" cy="856" r="12" fill="currentColor"/><circle cx="238" cy="856" r="12" fill="currentColor"/></svg>
      </button>
      <input type="text" placeholder="Message" aria-label="Message">
      <button type="button" aria-label="Attach">
        <svg width="33" height="53" viewBox="551 802 96 155"><path d="M640 838V903Q640 951 599 951Q558 951 558 905V845Q558 808 586 808Q613 808 613 842V900Q613 919 599 919Q585 919 585 900V838" fill="none" stroke="currentColor" stroke-width="13" stroke-linecap="round"/></svg>
      </button>
      <button type="button" class="camera" aria-label="Camera">
        <svg width="52" height="48" viewBox="888 810 152 141"><path d="M901 833H932L948 817H980L996 833H1027Q1033 833 1033 839V937Q1033 943 1027 943H901Q895 943 895 937V839Q895 833 901 833Z" fill="none" stroke="currentColor" stroke-width="13"/><circle cx="964" cy="888" r="27" fill="none" stroke="currentColor" stroke-width="13"/></svg>
      </button>
    </div>
    <button type="button" class="mic" aria-label="Record voice message">
      <svg width="36" height="50" viewBox="1303 802 104 148"><rect x="1332" y="802" width="46" height="94" rx="23" fill="currentColor"/><path d="M1309 878Q1312 922 1355 922Q1398 922 1401 878M1355 922V942" fill="none" stroke="currentColor" stroke-width="13" stroke-linecap="round"/></svg>
    </button>
  </form>
</body>
</html>
```
FILE: styles.css
```css
* {
  box-sizing: border-box;
}

body {
  margin: 0;
  min-height: 100vh;
  position: relative;
  background: #0b0f14;
  font-family: "Noto Sans", sans-serif;
  color: #fff;
}

button {
  margin: 0;
  padding: 0;
  border: 0;
  background: none;
  color: inherit;
  font: inherit;
}

svg {
  display: block;
}

.defs {
  position: absolute;
  width: 0;
  height: 0;
}

.wallpaper {
  position: absolute;
  top: 0;
  left: 0;
  width: 100%;
  height: calc(100% - 10px);
  z-index: -1;
  fill: none;
  stroke: #22272c;
  stroke-width: 2;
  stroke-linejoin: round;
  stroke-linecap: round;
}

/* messages */
.chat {
  display: flex;
  flex-direction: column;
  align-items: flex-start;
  gap: 6px;
  padding: 0 43px 0 44px;
}

.row {
  display: flex;
  align-items: flex-start;
  gap: 22px;
  width: 100%;
}

.bubble {
  position: relative;
  display: flex;
  align-items: flex-end;
  padding: 12px 22px 10px 24px;
  border-radius: 32px;
  background: #1f272a;
}

.bubble p {
  margin: 0;
  padding-bottom: 10px;
  font-size: 43px;
  line-height: 48px;
}

.meta {
  display: flex;
  align-items: center;
  gap: 12px;
  margin-left: 36px;
  font-size: 30px;
  line-height: 30px;
  color: #8e9699;
}

.meta svg {
  width: 42px;
  height: 27px;
}

.out {
  align-self: flex-end;
  background: #144d37;
}

.out .meta {
  margin-left: 22px;
  color: #94b5a6;
}

.meta .read {
  color: #53b9e8;
}

.first {
  margin-top: 19px;
}

.out.first {
  border-top-right-radius: 0;
}

.in.first {
  border-top-left-radius: 0;
}

.first::after {
  content: "";
  position: absolute;
  top: 0;
  left: 100%;
  width: 18px;
  height: 26px;
  background: inherit;
  clip-path: path("M0 0H14Q20 2 16 8L0 25Z");
}

.in.first::after {
  left: auto;
  right: 100%;
  transform: scaleX(-1);
}

/* time sits at the end of the last line */
.long {
  display: grid;
  width: 868px;
  max-width: 100%;
}

.long p,
.long .meta {
  grid-area: 1 / 1;
}

.long .meta {
  align-self: end;
  justify-self: end;
}

.forward {
  display: grid;
  place-items: center;
  width: 82px;
  height: 82px;
  margin-top: 244px;
  border-radius: 50%;
  background: rgba(13, 24, 32, .75);
}

/* photo message */
.photo {
  display: block;
  width: 685px;
  padding: 0 11px 10px;
  border-radius: 0 0 32px 32px;
}

.shot {
  position: relative;
  padding: 0 15px 13px;
  border-radius: 0 0 22px 22px;
  background: #282a2f;
  font-family: Roboto, sans-serif;
  font-size: 13px;
}

.shot > time {
  position: absolute;
  right: 14px;
  bottom: 12px;
  font-family: "Noto Sans", sans-serif;
  font-size: 30px;
  line-height: 30px;
}

.cards {
  display: grid;
  grid-template-columns: 316fr 307fr;
  gap: 10px;
}

.cards span {
  height: 6px;
  border-bottom: 2px solid #1c1e22;
  border-radius: 0 0 4px 4px;
  background: #303338;
}

.tabs {
  display: flex;
  margin-top: 21px;
  height: 74px;
  border-bottom: 3px solid #3a3e46;
  background: linear-gradient(#282a2f 50%, #1d1f24);
}

.tabs a {
  position: relative;
  display: flex;
  flex-direction: column;
  align-items: center;
  justify-content: flex-end;
  gap: 4px;
  width: 89px;
  padding-bottom: 13px;
  color: #f1f1f1;
  font-size: 15px;
  font-weight: bold;
  line-height: 18px;
  text-decoration: none;
}

.tabs .home {
  justify-content: flex-start;
  width: 60px;
  padding: 15px 0 0;
  border-radius: 3px 3px 0 0;
  background: #3a3e47;
}

.tabs .wide {
  width: 114px;
  gap: 0;
}

.tabs .pad {
  position: absolute;
  top: 4px;
  left: 2px;
}

.tabs .hen {
  position: absolute;
  top: -2px;
  right: 9px;
}

.menu {
  display: grid;
  grid-template-columns: 147fr 163fr 161fr 147fr;
  gap: 4px 5px;
  margin-top: 7px;
}

.menu button {
  position: relative;
  display: flex;
  align-items: center;
  justify-content: center;
  gap: 6px;
  height: 35px;
  border-radius: 3px;
  background: linear-gradient(#42454e, #303239);
  box-shadow: 0 0 2px #15171a;
  font-weight: 500;
}

.menu .active {
  background: #212327;
  box-shadow: none;
}

.star {
  position: absolute;
  top: -2px;
  left: 26px;
  color: #f3cf35;
  font: 15px/18px "DejaVu Sans", sans-serif;
}

.history {
  height: 388px;
  margin-top: 14px;
  border-radius: 3px;
  background: #2f3237;
  box-shadow: 0 1px 4px #121315;
}

.history header {
  display: flex;
  align-items: center;
  height: 39px;
  padding: 0 16px;
  border-radius: 3px 3px 0 0;
  background: linear-gradient(#e2d77e, #9d8534 60%, #a1873a);
  color: #1d1a0c;
  font-weight: 500;
}

.history h2 {
  flex: 1;
  margin: 0 0 0 5px;
  font-size: 13px;
  font-weight: 500;
}

.select {
  position: relative;
  margin-left: 18px;
}

.select select {
  display: block;
  width: 209px;
  height: 26px;
  padding: 0 11px;
  border: 0;
  border-radius: 2px;
  appearance: none;
  background: #fff;
  color: #333;
  font: 500 13px Roboto, sans-serif;
}

.select svg {
  position: absolute;
  top: 10px;
  right: 6px;
}

.history table {
  width: calc(100% - 30px);
  margin: 14px 15px 0;
  border-collapse: separate;
  border-spacing: 0;
  table-layout: fixed;
  line-height: 18px;
}

.history th {
  height: 39px;
  padding: 0 10px;
  font-weight: 500;
  text-align: left;
}

.history td {
  padding: 5px 4px;
  border-top: 1px solid #212328;
  color: #72767b;
}

.history tbody tr:nth-child(odd) {
  background: #353840;
}

.history th.date,
.history th.market {
  width: 73px;
}

.history td.date {
  padding-right: 12px;
  color: #5cb860;
}

.history td.desc {
  color: #fff;
  font-weight: 500;
}

.history .amount {
  width: 90px;
  text-align: right;
}

.history td.amount {
  color: #ddd;
}

.history td.plus {
  color: #4fb0c9;
}

.history .balance {
  width: 73px;
  text-align: right;
}

.history td.balance {
  color: #d58a20;
}

.page {
  display: block;
  width: 33px;
  height: 36px;
  margin-top: 43px;
  border-radius: 2px;
  background: linear-gradient(#050506, #1b1c1f);
  box-shadow: 0 0 2px #000;
}

.ticker {
  height: 29px;
  margin-top: 46px;
  padding-left: 25px;
  overflow: hidden;
  box-shadow: 0 10px #282a2f, 0 12px #1b1c1f;
  color: transparent;
  background-image: linear-gradient(90deg, #e4e4e4 66%, #aaa 74%, #888 84%, #444 90%), linear-gradient(#131415, #131415);
  background-clip: text, border-box;
  font-size: 12px;
  line-height: 29px;
  white-space: nowrap;
}

/* composer */
.composer {
  display: flex;
  align-items: center;
  gap: 13px;
  padding: 19px 12px 23px 13px;
}

.field {
  flex: 1;
  display: flex;
  align-items: center;
  height: 121px;
  min-width: 0;
  padding: 0 34px;
  border-radius: 61px;
  background: #1f272a;
  color: #8e9699;
}

.field input {
  flex: 1;
  min-width: 0;
  padding: 0 32px;
  border: 0;
  outline: 0;
  background: none;
  color: #fff;
  font: 48px "Noto Sans", sans-serif;
}

.field input::placeholder {
  color: #8e9699;
  opacity: 1;
}

.field .camera {
  margin-left: 82px;
}

.mic {
  display: grid;
  place-items: center;
  width: 123px;
  height: 123px;
  border-radius: 50%;
  background: #23c263;
  color: #0b1014;
}
```
